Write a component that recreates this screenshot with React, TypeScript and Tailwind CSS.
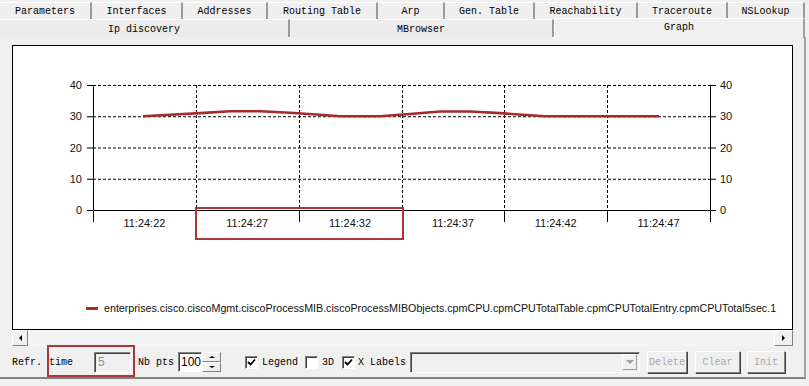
import React from "react";

const ROW1 = [
  { label: "Parameters", w: 92 },
  { label: "Interfaces", w: 91 },
  { label: "Addresses", w: 85 },
  { label: "Routing Table", w: 110 },
  { label: "Arp", w: 67 },
  { label: "Gen. Table", w: 90 },
  { label: "Reachability", w: 103 },
  { label: "Traceroute", w: 90 },
  { label: "NSLookup", w: 77 },
];

const ROW2 = [
  { label: "Ip discovery", w: 290 },
  { label: "MBrowser", w: 264 },
];

// plot geometry, in svg coords (chart box inner origin = page 13,46)
const X0 = 80;
const X1 = 697;
const Y0 = 164;
const YSTEP = 31.25;
const XSTEP = (X1 - X0) / 6;
const TIMES = ["11:24:22", "11:24:27", "11:24:32", "11:24:37", "11:24:42", "11:24:47"];

// [page x, value]
const SERIES: [number, number][] = [
  [143, 30],
  [170, 30.5],
  [200, 31],
  [230, 31.6],
  [260, 31.6],
  [290, 31.1],
  [320, 30.5],
  [340, 30],
  [380, 30],
  [410, 30.7],
  [440, 31.5],
  [470, 31.5],
  [500, 31],
  [530, 30.3],
  [545, 30],
  [659, 30],
];

const vy = (v: number) => Y0 - (v / 10) * YSTEP;

function Chart() {
  const pts = SERIES.map(([x, v]) => `${x - 13},${vy(v)}`).join(" ");
  return (
    <svg width={779} height={200} className="block">
      {/* horizontal grid */}
      {[1, 2, 3, 4].map((i) => (
        <line
          key={`h${i}`}
          x1={X0}
          x2={X1}
          y1={Y0 - i * YSTEP + 0.5}
          y2={Y0 - i * YSTEP + 0.5}
          stroke="#000"
          strokeDasharray="3 2"
        />
      ))}
      {/* vertical grid */}
      {[1, 2, 3, 4, 5].map((i) => (
        <line
          key={`v${i}`}
          x1={Math.round(X0 + i * XSTEP) + 0.5}
          x2={Math.round(X0 + i * XSTEP) + 0.5}
          y1={Y0 - 4 * YSTEP}
          y2={Y0}
          stroke="#000"
          strokeDasharray="3 2"
        />
      ))}
      {/* axes */}
      <line x1={X0 + 0.5} x2={X0 + 0.5} y1={Y0 - 4 * YSTEP} y2={Y0 + 12} stroke="#000" />
      <line x1={X1 + 0.5} x2={X1 + 0.5} y1={Y0 - 4 * YSTEP} y2={Y0 + 12} stroke="#000" />
      <line x1={X0 - 6} x2={X1 + 6} y1={Y0 + 0.5} y2={Y0 + 0.5} stroke="#000" />
      {[1, 2, 3, 4, 5].map((i) => (
        <line
          key={`t${i}`}
          x1={Math.round(X0 + i * XSTEP) + 0.5}
          x2={Math.round(X0 + i * XSTEP) + 0.5}
          y1={Y0}
          y2={Y0 + 12}
          stroke="#000"
        />
      ))}
      {[0, 1, 2, 3, 4].map((i) => (
        <g key={`yl${i}`}>
          <line x1={X0 - 6} x2={X0} y1={Y0 - i * YSTEP + 0.5} y2={Y0 - i * YSTEP + 0.5} stroke="#000" />
          <line x1={X1} x2={X1 + 6} y1={Y0 - i * YSTEP + 0.5} y2={Y0 - i * YSTEP + 0.5} stroke="#000" />
          <text
            x={X0 - 11}
            y={Y0 - i * YSTEP + 4}
            textAnchor="end"
            fontSize={11}
            fontFamily="'Liberation Sans', Arial, sans-serif"
            fill="#111"
          >
            {i * 10}
          </text>
          <text
            x={X1 + 10}
            y={Y0 - i * YSTEP + 4}
            fontSize={11}
            fontFamily="'Liberation Sans', Arial, sans-serif"
            fill="#111"
          >
            {i * 10}
          </text>
        </g>
      ))}
      {TIMES.map((t, i) => (
        <text
          key={t}
          x={X0 + (i + 0.5) * XSTEP}
          y={Y0 + 17}
          textAnchor="middle"
          fontSize={11}
          fontFamily="'Liberation Sans', Arial, sans-serif"
          fill="#111"
        >
          {t}
        </text>
      ))}
      <polyline points={pts} fill="none" stroke="#a52a2a" strokeWidth={2.6} strokeLinejoin="round" />
    </svg>
  );
}

function Check({ on }: { on: boolean }) {
  return (
    <span className="flex h-[13px] w-[13px] items-center justify-center border border-t-[#808080] border-l-[#808080] border-b-white border-r-white bg-white shadow-[inset_1px_1px_0_#404040]">
      {on && (
        <svg width={9} height={9} viewBox="0 0 9 9">
          <polyline points="1,4 3.5,6.5 8,1.5" fill="none" stroke="#000" strokeWidth={1.8} />
        </svg>
      )}
    </span>
  );
}

function Btn({ label, w }: { label: string; w: number }) {
  return (
    <div
      className="flex h-[22px] items-center justify-center border border-t-white border-l-white border-b-[#808080] border-r-[#808080] text-[#a8a8a8] shadow-[1px_1px_0_#404040]"
      style={{ width: w }}
    >
      {label}
    </div>
  );
}

export default function App() {
  return (
    <div className="relative h-[386px] w-[809px] overflow-hidden bg-[#f0f0f0] font-['Liberation_Mono','DejaVu_Sans_Mono',monospace] text-[10px] text-black">
      {/* tab row 1 */}
      <div className="flex h-[19px] pt-[2px]">
        {ROW1.map((t) => (
          <div
            key={t.label}
            className="flex h-[17px] shrink-0 items-center justify-center border-t border-r-2 border-t-white border-r-[#9a9a9a] bg-[#efefef]"
            style={{ width: t.w }}
          >
            {t.label}
          </div>
        ))}
      </div>
      {/* tab row 2 */}
      <div className="flex h-[18px]">
        {ROW2.map((t) => (
          <div
            key={t.label}
            className="flex h-[18px] shrink-0 items-center justify-center border-t border-r-2 border-t-white border-r-[#9a9a9a] bg-[#ececec] pt-[1px]"
            style={{ width: t.w }}
          >
            {t.label}
          </div>
        ))}
        <div className="-mt-[1px] flex h-[20px] w-[251px] shrink-0 items-start justify-center border-l border-t border-r-2 border-l-white border-t-white border-r-[#a0a0a0] bg-[#f0f0f0] pt-[1px]">
          Graph
        </div>
      </div>
      {/* panel */}
      <div className="relative h-[342px] w-[806px] border-r-2 border-b-2 border-r-[#a0a0a0] border-b-[#808080] pt-[8px] pl-[12px]">
        <div className="relative h-[285px] w-[781px] border border-black bg-white">
          <Chart />
          <div className="mt-[54px] flex items-center pl-[73px] font-['Liberation_Sans',Arial,sans-serif] text-[10.7px] text-[#111]">
            <span className="mr-[6px] h-[3px] w-[12px] bg-[#b02a2a]" />
            enterprises.cisco.ciscoMgmt.ciscoProcessMIB.ciscoProcessMIBObjects.cpmCPU.cpmCPUTotalTable.cpmCPUTotalEntry.cpmCPUTotal5sec.1
          </div>
        </div>
        {/* horizontal scrollbar */}
        <div className="flex h-[16px] w-[781px] bg-[#f4f4f4]">
          <div className="flex h-[16px] w-[16px] items-center justify-center border border-t-white border-l-white border-b-[#808080] border-r-[#808080] bg-[#f0f0f0]">
            <span className="h-0 w-0 border-y-[3px] border-r-[3px] border-y-transparent border-r-black" />
          </div>
          <div className="flex-1" />
          <div className="flex h-[16px] w-[19px] items-center justify-center border border-t-white border-l-white border-b-[#808080] border-r-[#808080] bg-[#f0f0f0]">
            <span className="h-0 w-0 border-y-[3px] border-l-[3px] border-y-transparent border-l-black" />
          </div>
        </div>
        {/* controls */}
        <div className="mt-[5px] flex h-[22px] items-center">
          <span className="w-[37px]">Refr.</span>
          <span className="w-[45px]">time</span>
          <div className="flex h-[21px] w-[37px] items-center border border-t-[#808080] border-l-[#808080] border-b-white border-r-white bg-[#f0f0f0] pl-[3px] font-['Liberation_Sans',Arial,sans-serif] text-[12px] text-[#909090] shadow-[inset_1px_1px_0_#404040]">
            5
          </div>
          <span className="ml-[7px] w-[40px]">Nb pts</span>
          <div className="flex h-[20px] w-[24px] items-center border border-t-[#808080] border-l-[#808080] border-b-white border-r-white bg-white pl-[2px] font-['Liberation_Sans',Arial,sans-serif] text-[12px] shadow-[inset_1px_1px_0_#404040]">
            100
          </div>
          <div className="flex h-[20px] w-[19px] flex-col">
            <div className="flex flex-1 items-center justify-center border border-t-white border-l-white border-b-[#808080] border-r-[#808080]">
              <span className="h-0 w-0 border-x-[3px] border-b-[2px] border-x-transparent border-b-black" />
            </div>
            <div className="flex flex-1 items-center justify-center border border-t-white border-l-white border-b-[#808080] border-r-[#808080]">
              <span className="h-0 w-0 border-x-[3px] border-t-[2px] border-x-transparent border-t-black" />
            </div>
          </div>
          <span className="ml-[24px]">
            <Check on />
          </span>
          <span className="ml-[4px]">Legend</span>
          <span className="ml-[7px]">
            <Check on={false} />
          </span>
          <span className="ml-[4px]">3D</span>
          <span className="ml-[8px]">
            <Check on />
          </span>
          <span className="ml-[3px]">X Labels</span>
          <div className="ml-[4px] flex h-[21px] w-[230px] items-center justify-end border border-t-[#808080] border-l-[#808080] border-b-white border-r-white bg-[#f0f0f0] pr-[2px] shadow-[inset_1px_1px_0_#404040]">
            <div className="flex h-[16px] w-[15px] items-center justify-center border border-t-white border-l-white border-b-[#a0a0a0] border-r-[#a0a0a0]">
              <span className="h-0 w-0 border-x-[4px] border-t-[4px] border-x-transparent border-t-[#a0a0a0]" />
            </div>
          </div>
          <div className="ml-[7px]">
            <Btn label="Delete" w={40} />
          </div>
          <div className="ml-[8px]">
            <Btn label="Clear" w={45} />
          </div>
          <div className="ml-[7px]">
            <Btn label="Init" w={38} />
          </div>
        </div>
      </div>
      {/* annotation boxes */}
      <div className="absolute left-[195px] top-[207px] h-[33px] w-[209px] border-2 border-[#a8383c]" />
      <div className="absolute left-[47px] top-[345px] h-[32px] w-[88px] border-2 border-[#a8383c]" />
    </div>
  );
}
